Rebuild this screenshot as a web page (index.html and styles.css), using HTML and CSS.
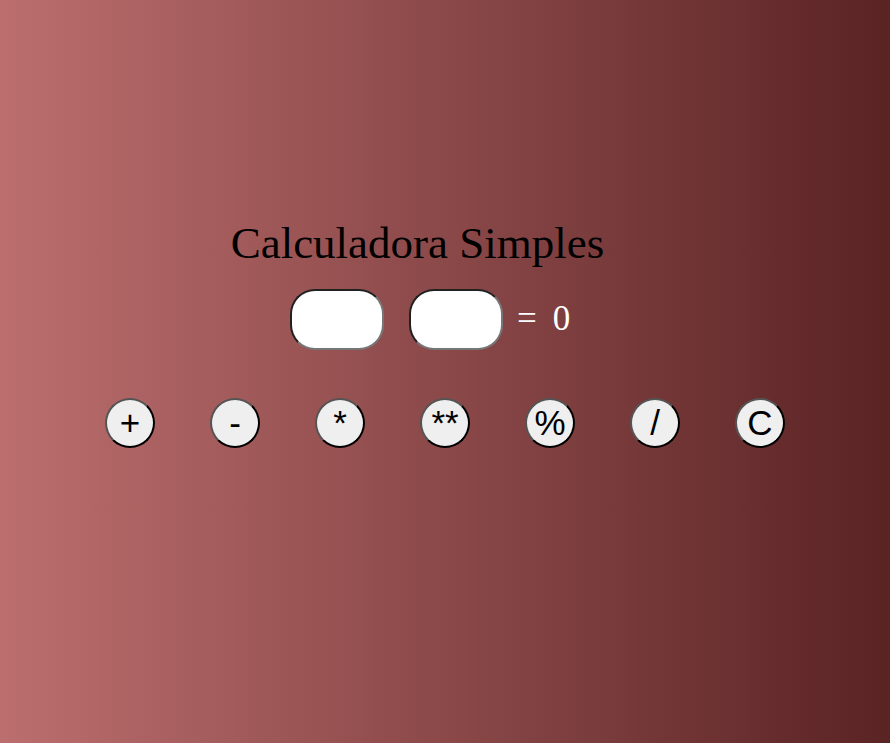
FILE: index.html
```html
<!DOCTYPE html>
<html lang="pt-BR">
<head>
<meta charset="utf-8">
<title>Calculadora Simples</title>
<link rel="stylesheet" href="styles.css">
</head>
<body>
<main class="calculator">
<h1 class="title">Calculadora Simples</h1>
<div class="expression">
<input class="number" type="text" inputmode="decimal" aria-label="Primeiro número">
<input class="number" type="text" inputmode="decimal" aria-label="Segundo número">
<output class="result"><span>=</span><span>0</span></output>
</div>
<div class="operations">
<button class="operation" type="button">+</button>
<button class="operation" type="button">-</button>
<button class="operation" type="button">*</button>
<button class="operation" type="button">**</button>
<button class="operation" type="button">%</button>
<button class="operation" type="button">/</button>
<button class="operation" type="button">C</button>
</div>
</main>
</body>
</html>
```
FILE: styles.css
```css
* {
  box-sizing: border-box;
}

body {
  margin: 0;
  min-height: 100vh;
  font-family: "Liberation Serif", serif;
  background: linear-gradient(to right, #bc6e6e, #5a2324);
}

.calculator {
  display: flex;
  flex-direction: column;
  align-items: center;
  padding-top: 217px;
}

.title {
  margin: 0;
  padding-right: 55px;
  font-size: 45px;
  line-height: 52px;
  font-weight: 400;
}

.expression {
  display: flex;
  align-items: center;
  margin-top: 20px;
  padding-right: 30px;
}

.number {
  width: 94px;
  height: 61px;
  margin-right: 25px;
  padding: 1px 12px;
  border: 2px inset #767676;
  border-radius: 25px;
  background: #fff;
  font-size: 35px;
}

.number + .number {
  margin-right: 14px;
}

.result {
  display: flex;
  gap: 16px;
  padding-bottom: 2px;
  color: #fff;
  font-size: 35px;
  line-height: 40px;
}

.operations {
  display: flex;
  justify-content: center;
  gap: 55px;
  margin-top: 48px;
}

.operation {
  width: 50px;
  height: 50px;
  padding: 0;
  border: 2px outset #000;
  border-radius: 50%;
  background: #efefef;
  color: #000;
  font-family: "Liberation Sans", sans-serif;
  font-size: 35px;
  line-height: 40px;
}
```
